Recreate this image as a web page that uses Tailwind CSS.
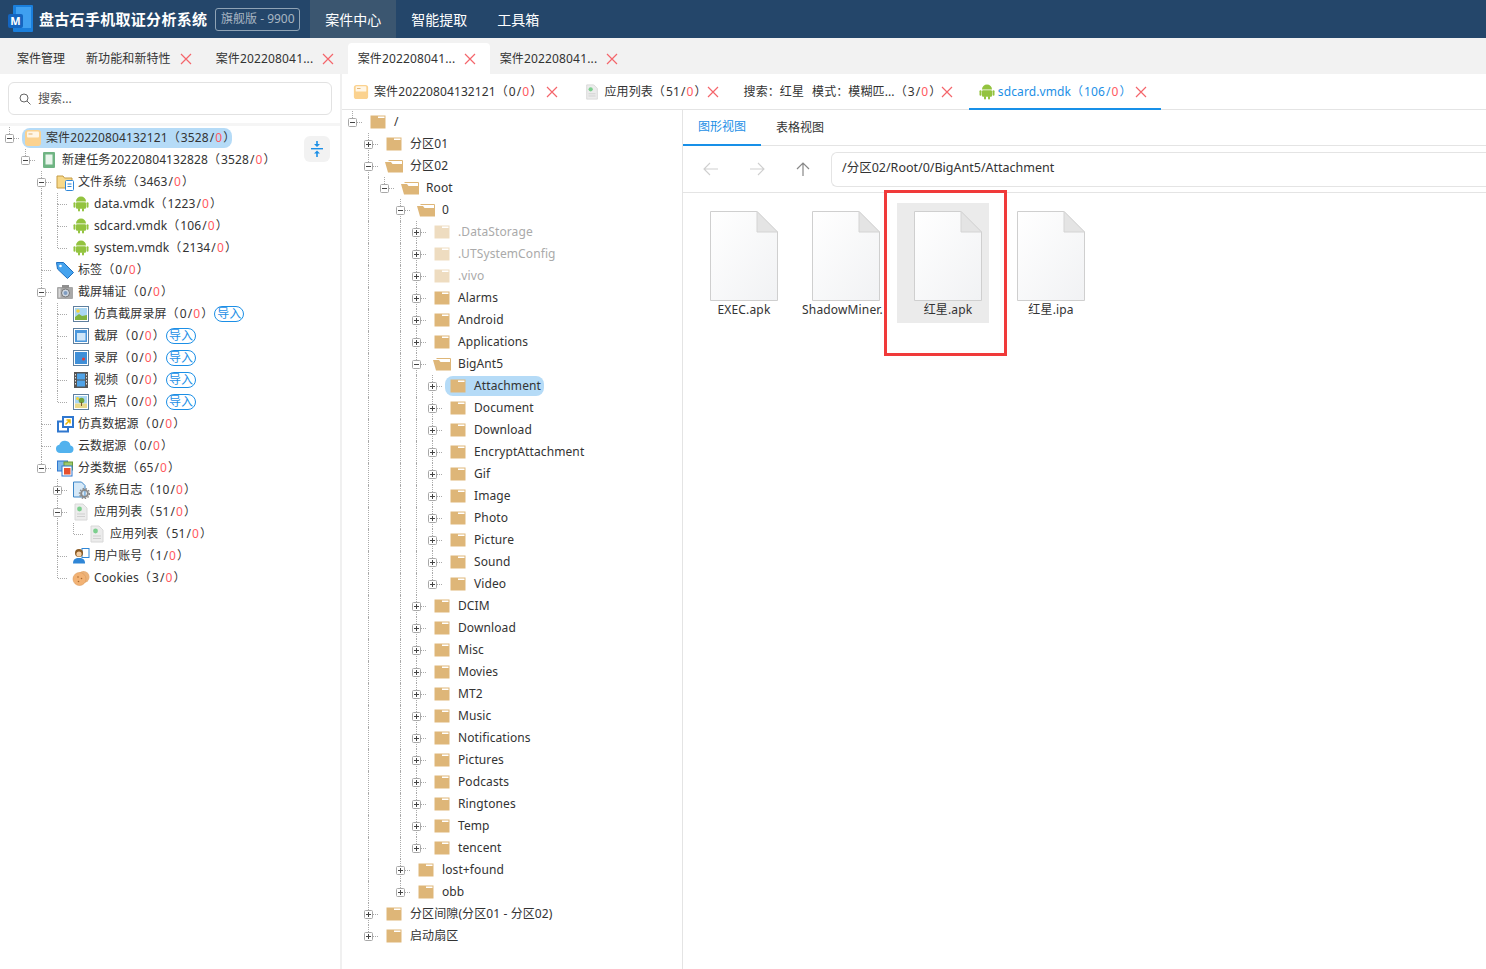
<!DOCTYPE html>
<html lang="en">
<head>
    <meta charset="UTF-8">
    <title>盘古石手机取证分析系统</title>
    <script src="https://cdn.jsdelivr.net/npm/@tailwindcss/browser@4"></script>
</head>
<body class="h-[969px] w-[1486px] overflow-hidden bg-white font-['Noto_Sans','Noto_Sans_CJK_SC',sans-serif] text-[12px] text-[#333]">

    <!-- Top bar -->
    <header class="flex h-[38px] items-center bg-[#24466a] text-white">
        <svg class="ml-[8px] h-[28px] w-[25px] shrink-0" viewBox="0 0 25 28">
            <path d="M5 1a1 1 0 0 1 1-1h18a1 1 0 0 1 1 1v25a1 1 0 0 1-1 1H6a1 1 0 0 1-1-1z" fill="#1a7fdc"/>
            <path d="M8 2h15v21H8z" fill="#3fa0f0"/>
            <rect x="0" y="9" width="15" height="14" rx="2" fill="#1465c0"/>
            <text x="7.500" y="20" text-anchor="middle" font-size="11" font-weight="700" fill="#fff" font-family="Noto Sans">M</text>
        </svg>
        <div class="ml-[6px] text-[15px] font-bold tracking-[0.3px]">盘古石手机取证分析系统</div>
        <div class="ml-[8px] flex h-[23px] w-[85px] items-center justify-center rounded-[3px] border border-[#8fa3b5] text-[12px] text-[#a9b6c3]">旗舰版 - 9900</div>
        <nav class="ml-[10px] flex h-full text-[14px]">
            <div class="flex items-center bg-[#3b5670] px-[15px]">案件中心</div>
            <div class="flex items-center px-[15px]">智能提取</div>
            <div class="flex items-center px-[15px]">工具箱</div>
        </nav>
    </header>

    <!-- Case tabs -->
    <div class="flex h-[36px] items-end whitespace-nowrap bg-[#f2f2f2] pl-[7px]">
        <div class="flex h-[31px] items-center pl-[10px] pr-[11px]">案件管理</div>
        <div class="flex h-[31px] items-center pl-[10px] pr-[14px] tracking-[0.1px]">新功能和新特性<svg class="ml-[9px] h-[12px] w-[12px]" viewBox="0 0 12 12"><path d="M1 1l10 10M11 1L1 11" stroke="#f4656b" stroke-width="1.2"/></svg></div>
        <div class="flex h-[31px] items-center pl-[10px] pr-[14px]"><span class="w-[97px] tracking-[0.15px]">案件202208041...</span><svg class="ml-[9px] h-[12px] w-[12px]" viewBox="0 0 12 12"><path d="M1 1l10 10M11 1L1 11" stroke="#f4656b" stroke-width="1.2"/></svg></div>
        <div class="flex h-[31px] items-center rounded-t-[4px] bg-white pl-[10px] pr-[14px]"><span class="w-[97px] tracking-[0.15px]">案件202208041...</span><svg class="ml-[9px] h-[12px] w-[12px]" viewBox="0 0 12 12"><path d="M1 1l10 10M11 1L1 11" stroke="#f4656b" stroke-width="1.2"/></svg></div>
        <div class="flex h-[31px] items-center pl-[10px] pr-[14px]"><span class="w-[97px] tracking-[0.15px]">案件202208041...</span><svg class="ml-[9px] h-[12px] w-[12px]" viewBox="0 0 12 12"><path d="M1 1l10 10M11 1L1 11" stroke="#f4656b" stroke-width="1.2"/></svg></div>
    </div>

    <div class="flex h-[895px]">
        <!-- Left: case tree -->
        <aside class="relative w-[340px] shrink-0">
            <div class="px-[8px] pt-[8px]">
                <div class="flex h-[33px] items-center rounded-[6px] border border-[#e2e2e2] pl-[10px] text-[#555]">
                    <svg class="h-[12px] w-[12px]" viewBox="0 0 12 12" fill="none" stroke="#666" stroke-width="1"><circle cx="5" cy="5" r="4"/><path d="M8 8l3.500 3.500"/></svg>
                    <span class="ml-[7px]">搜索...</span>
                </div>
            </div>
            <div class="mt-[8px] h-[3px] bg-[#f5f5f5]"></div>
            <div id="case-tree" class="pt-[1px]"></div>
            <button class="absolute left-[304px] top-[62px] flex h-[26px] w-[26px] items-center justify-center rounded-[6px] bg-[#f2f2f2]">
                <svg class="h-[18px] w-[14px]" viewBox="0 0 14 18" fill="#1c8fe6"><rect x="1" y="8" width="12" height="1.400"/><path d="M6.200 1h1.600v3H10L7 7 4 4h2.200zM7 10.500l3 3H7.800V17H6.200v-3.500H4z"/></svg>
            </button>
        </aside>

        <div class="w-[2px] shrink-0 bg-[#f0f0f0]"></div>

        <main class="min-w-0 flex-1">
            <!-- Opened data tabs -->
            <div class="flex h-[36px] items-stretch whitespace-nowrap border-b border-[#e4e4e4] pl-[1px] tracking-[0.1px]">
                <div class="flex items-center pl-[10px] pr-[16px] pt-[1px]">
                    <svg class="h-[16px] w-[16px]" viewBox="0 0 18 18"><rect x="1" y="1" width="16" height="16" rx="3" fill="#fbd28f"/><rect x="3" y="2.500" width="12" height="6" rx="1" fill="#fff6e6"/><rect x="4.500" y="4.500" width="4" height="1" fill="#e0b070"/></svg>
                    <span class="ml-[5px]">案件20220804132121<span class="mr-[1px]">（</span>0<span class="mx-[1px]">/</span><span class="text-[#ff5a5f]">0</span><span class="ml-[1px]">）</span></span>
                    <svg class="ml-[4px] h-[12px] w-[12px]" viewBox="0 0 12 12"><path d="M1 1l10 10M11 1L1 11" stroke="#f4656b" stroke-width="1.2"/></svg>
                </div>
                <div class="flex items-center pl-[10px] pr-[15px] pt-[1px]">
                    <svg class="h-[16px] w-[16px]" viewBox="0 0 18 18"><path d="M3 1h8l4 4v12H3z" fill="#ececec" stroke="#d8d8d8"/><circle cx="7.500" cy="6" r="2.400" fill="#7ccf8e"/><path d="M5 11h8M5 13.500h8" stroke="#cfcfcf"/></svg>
                    <span class="ml-[4px]">应用列表<span class="mr-[1px]">（</span>51<span class="mx-[1px]">/</span><span class="text-[#ff5a5f]">0</span><span class="ml-[1px]">）</span></span>
                    <svg class="h-[12px] w-[12px]" viewBox="0 0 12 12"><path d="M1 1l10 10M11 1L1 11" stroke="#f4656b" stroke-width="1.2"/></svg>
                </div>
                <div class="flex items-center pl-[10px] pr-[16px] pt-[1px]">
                    <span>搜索：红星<span class="ml-[8px]">模式：模糊匹...<span class="mr-[1px]">（</span>3<span class="mx-[1px]">/</span><span class="text-[#ff5a5f]">0</span><span class="ml-[1px]">）</span></span></span>
                    <svg class="-ml-[0.5px] h-[12px] w-[12px]" viewBox="0 0 12 12"><path d="M1 1l10 10M11 1L1 11" stroke="#f4656b" stroke-width="1.2"/></svg>
                </div>
                <div class="-mb-[1px] flex items-center border-b-2 border-[#1890e8] pl-[10px] pr-[14px] pt-[1px] text-[#1c8fe6]">
                    <svg class="h-[16px] w-[16px]" viewBox="0 0 16 16" fill="#93c33f"><path d="M3 5.600a5 5 0 0 1 10 0z"/><rect x="3" y="6.200" width="10" height="6.600" rx="1"/><rect x=".5" y="6.200" width="2" height="5.600" rx="1"/><rect x="13.500" y="6.200" width="2" height="5.600" rx="1"/><rect x="5" y="12" width="2" height="3.600" rx="1"/><rect x="9" y="12" width="2" height="3.600" rx="1"/></svg>
                    <span class="ml-[3px]">sdcard.vmdk<span class="mr-[1px]">（</span>106<span class="mx-[1px]">/</span><span class="text-[#ff5a5f]">0</span><span class="ml-[1px]">）</span></span>
                    <svg class="ml-[3px] h-[12px] w-[12px]" viewBox="0 0 12 12"><path d="M1 1l10 10M11 1L1 11" stroke="#f4656b" stroke-width="1.2"/></svg>
                </div>
            </div>

            <div class="flex h-[859px]">
                <!-- Middle: folder tree -->
                <section id="folder-tree" class="w-[341px] shrink-0 border-r border-[#e4e4e4] pl-[1px] pt-[1px]"></section>

                <!-- Right: file view -->
                <section class="relative min-w-0 flex-1">
                    <div class="flex h-[36px] border-b border-[#e4e4e4]">
                        <div class="-mb-[1px] flex w-[78px] items-center justify-center border-b-2 border-[#1890e8] text-[#1c8fe6]">图形视图</div>
                        <div class="flex w-[78px] items-center justify-center">表格视图</div>
                    </div>
                    <div class="flex h-[47px] items-center border-b border-[#e4e4e4] pl-[20px]">
                        <svg class="h-[14px] w-[16px]" viewBox="0 0 16 14" fill="none" stroke="#cfcfcf" stroke-width="1.1"><path d="M15 7H1M7 1L1 7l6 6"/></svg>
                        <svg class="ml-[30px] h-[14px] w-[16px]" viewBox="0 0 16 14" fill="none" stroke="#cfcfcf" stroke-width="1.1"><path d="M1 7h14M9 1l6 6-6 6"/></svg>
                        <svg class="ml-[31px] h-[14px] w-[14px]" viewBox="0 0 14 14" fill="none" stroke="#888" stroke-width="1.2"><path d="M7 14V1M1 7l6-6 6 6"/></svg>
                        <div class="ml-[21px] flex h-[35px] flex-1 items-center rounded-l-[6px] border border-r-0 border-[#e4e4e4] pb-[2px] pl-[10px] text-[12.5px]">/分区02/Root/0/BigAnt5/Attachment</div>
                    </div>
                    <div id="file-grid" class="flex gap-[10px] pl-[10px] pt-[10px]"></div>
                    <!-- red marker drawn over the shot -->
                    <div class="pointer-events-none absolute left-[201px] top-[80px] h-[166px] w-[123px] border-[3px] border-[#f03a3a]"></div>
                </section>
            </div>
        </main>
    </div>

    <script>
        const imgFrame = '<rect x="1.500" y="1.500" width="15" height="15" fill="#fff" stroke="#5e7f9e"/>';
        const ICONS = {
            case: '<rect x="1" y="1" width="16" height="16" rx="3" fill="#fbd28f"/><rect x="3" y="2.500" width="12" height="6" rx="1" fill="#fff6e6"/><rect x="4.500" y="4.500" width="4" height="1" fill="#e0b070"/>',
            device: '<rect x="3" y="1" width="12" height="16" rx="1" fill="#6fb483"/><rect x="5.500" y="3.500" width="7" height="10" fill="#e9f5ec"/>',
            fs: '<path d="M1 3h6l1.500 2H16v10H1z" fill="#f7d98a" stroke="#c59b45"/><rect x="9.500" y="7.500" width="8" height="10" rx="1" fill="#fff" stroke="#2f86d6"/><path d="M11.500 11h4M11.500 13.500h4" stroke="#2f86d6"/>',
            android: '<g fill="#93c33f"><path d="M4 6.600a5 5 0 0 1 10 0z"/><rect x="4" y="7.200" width="10" height="6.600" rx="1"/><rect x="1.500" y="7.200" width="2" height="5.600" rx="1"/><rect x="14.500" y="7.200" width="2" height="5.600" rx="1"/><rect x="6" y="13" width="2" height="3.600" rx="1"/><rect x="10" y="13" width="2" height="3.600" rx="1"/></g>',
            tag: '<path d="M.5 1.500h7L17.500 11.500 11.500 17.500 1.500 8z" fill="#45a3ee" stroke="#1e6fc0"/><circle cx="4.500" cy="5" r="1.300" fill="#fff"/>',
            camera: '<rect x="1" y="4" width="16" height="12" rx="1" fill="#a8a8a8"/><rect x="2.500" y="5.500" width="2" height="9" fill="#d8d8d8"/><rect x="6" y="2" width="7" height="3" fill="#8f8f8f"/><circle cx="9.500" cy="10" r="4" fill="#cfd8e2" stroke="#777"/><circle cx="9.500" cy="10" r="2" fill="#7f9cc0"/>',
            pic: imgFrame + '<rect x="3" y="3" width="12" height="12" fill="#a9d6f2"/><circle cx="6" cy="6" r="1.800" fill="#f6d23a"/><path d="M3 15v-3l4-3 3 2 5-1v5z" fill="#7fb23f"/>',
            shot: imgFrame + '<rect x="3" y="3" width="12" height="12" fill="#4a97dc"/><rect x="5" y="6" width="8.500" height="7.500" fill="#cfe6f8"/>',
            rec: imgFrame + '<rect x="3" y="3" width="12" height="12" fill="#3f8fd8"/><circle cx="11.500" cy="10" r="1.500" fill="#e23a3a"/>',
            film: '<rect x="2" y="1" width="14" height="16" fill="#555"/><rect x="5" y="2.500" width="8" height="6" fill="#4fa3e8"/><rect x="5" y="9.500" width="8" height="6" fill="#4fa3e8"/><path d="M3.500 3v12M14.500 3v12" stroke="#ddd" stroke-dasharray="1.500 1.500"/>',
            photo: imgFrame + '<rect x="3" y="3" width="12" height="7.500" fill="#a9d6f2"/><rect x="3" y="10.500" width="12" height="4.500" fill="#e9d98a"/><circle cx="5.500" cy="5.500" r="1.500" fill="#f6d23a"/><circle cx="9.500" cy="7.500" r="2.800" fill="#6fa33c"/><rect x="9" y="9" width="1" height="4" fill="#7c5a2e"/>',
            sim: '<rect x="2" y="6.500" width="10" height="10" fill="#fff" stroke="#2f77cf" stroke-width="2"/><rect x="7" y="2" width="10" height="10" fill="#fff" stroke="#2f77cf" stroke-width="2"/><path d="M9.500 9.500l4-4M10.500 5h3.500v3.500" stroke="#e9b400" stroke-width="1.500" fill="none"/>',
            cloud: '<path d="M4.200 16a4.200 4.200 0 0 1-.9-8.300 5.800 5.800 0 0 1 11.200.8A3.800 3.800 0 0 1 14 16z" fill="#52b2ee"/>',
            cat: '<rect x="1.500" y="2" width="10" height="10" fill="#7fb9ea" stroke="#2f77cf"/><rect x="8" y="3" width="8.500" height="8" fill="#9fc96a" stroke="#6d9a3a"/><rect x="6" y="7" width="10" height="10" fill="#fff" stroke="#2f77cf"/><rect x="8" y="9" width="6.500" height="6.500" fill="#e6502e"/>',
            log: '<path d="M1.500 1h8l3.500 3.500V16h-11.500z" fill="#d6e9f8" stroke="#3c86c8"/><circle cx="12.500" cy="12.500" r="3.400" fill="none" stroke="#8a8a8a" stroke-width="2"/><circle cx="12.500" cy="12.500" r="5" fill="none" stroke="#8a8a8a" stroke-width="1.400" stroke-dasharray="1.500 1.500"/>',
            app: '<path d="M3 1h8l4 4v12H3z" fill="#ececec" stroke="#d8d8d8"/><circle cx="7.500" cy="6" r="2.400" fill="#7ccf8e"/><path d="M5 11h8M5 13.500h8" stroke="#cfcfcf"/>',
            user: '<rect x="10" y="1.500" width="7" height="9" fill="#fff" stroke="#2f86d6"/><path d="M1 16.500c0-4 2-5.500 6-5.500s6 1.500 6 5.500z" fill="#2f86d6"/><circle cx="7" cy="6" r="4" fill="#8a5a24"/><circle cx="7" cy="7" r="2.600" fill="#f5cfa4"/>',
            cookie: '<circle cx="11.500" cy="8" r="6" fill="#eab27a"/><circle cx="7.500" cy="10" r="6.500" fill="#f2b274" stroke="#dc9a5a" stroke-width=".6"/><circle cx="6" cy="8" r=".8" fill="#a86a30"/><circle cx="9.500" cy="9.500" r=".8" fill="#a86a30"/><circle cx="6.500" cy="12.500" r=".8" fill="#a86a30"/>',
            folder: '<path d="M1.500 2.500h15v13h-15z" fill="#deb678"/><rect x="9" y="3.500" width="6.500" height="1.500" fill="#fff"/>',
            folderFaded: '<path d="M1.500 2.500h15v13h-15z" fill="#eedcc0"/><rect x="9" y="3.500" width="6.500" height="1.500" fill="#fff"/>',
            folderOpen: '<path d="M3.500 3.500h14v11" fill="none" stroke="#deb678"/><path d="M0 5h6l1.500 2H18v8.500H3z" fill="#deb678"/>'
        };

        // depth, label, icon, expander ('-', '+', ''), counts, import badge, selected
        const CASE_ROWS = [
            [0, '案件20220804132121', 'case', '-', '3528', false, true],
            [1, '新建任务20220804132828', 'device', '-', '3528'],
            [2, '文件系统', 'fs', '-', '3463'],
            [3, 'data.vmdk', 'android', '', '1223'],
            [3, 'sdcard.vmdk', 'android', '', '106'],
            [3, 'system.vmdk', 'android', '', '2134'],
            [2, '标签', 'tag', '', '0'],
            [2, '截屏辅证', 'camera', '-', '0'],
            [3, '仿真截屏录屏', 'pic', '', '0', true],
            [3, '截屏', 'shot', '', '0', true],
            [3, '录屏', 'rec', '', '0', true],
            [3, '视频', 'film', '', '0', true],
            [3, '照片', 'photo', '', '0', true],
            [2, '仿真数据源', 'sim', '', '0'],
            [2, '云数据源', 'cloud', '', '0'],
            [2, '分类数据', 'cat', '-', '65'],
            [3, '系统日志', 'log', '+', '10'],
            [3, '应用列表', 'app', '-', '51'],
            [4, '应用列表', 'app', '', '51'],
            [3, '用户账号', 'user', '', '1'],
            [3, 'Cookies', 'cookie', '', '3']
        ];

        const FOLDER_ROWS = [
            [0, '/', 'folder', '-'],
            [1, '分区01', 'folder', '+'],
            [1, '分区02', 'folderOpen', '-'],
            [2, 'Root', 'folderOpen', '-'],
            [3, '0', 'folderOpen', '-'],
            [4, '.DataStorage', 'folderFaded', '+'],
            [4, '.UTSystemConfig', 'folderFaded', '+'],
            [4, '.vivo', 'folderFaded', '+'],
            [4, 'Alarms', 'folder', '+'],
            [4, 'Android', 'folder', '+'],
            [4, 'Applications', 'folder', '+'],
            [4, 'BigAnt5', 'folderOpen', '-'],
            [5, 'Attachment', 'folder', '+', null, false, true],
            [5, 'Document', 'folder', '+'],
            [5, 'Download', 'folder', '+'],
            [5, 'EncryptAttachment', 'folder', '+'],
            [5, 'Gif', 'folder', '+'],
            [5, 'Image', 'folder', '+'],
            [5, 'Photo', 'folder', '+'],
            [5, 'Picture', 'folder', '+'],
            [5, 'Sound', 'folder', '+'],
            [5, 'Video', 'folder', '+'],
            [4, 'DCIM', 'folder', '+'],
            [4, 'Download', 'folder', '+'],
            [4, 'Misc', 'folder', '+'],
            [4, 'Movies', 'folder', '+'],
            [4, 'MT2', 'folder', '+'],
            [4, 'Music', 'folder', '+'],
            [4, 'Notifications', 'folder', '+'],
            [4, 'Pictures', 'folder', '+'],
            [4, 'Podcasts', 'folder', '+'],
            [4, 'Ringtones', 'folder', '+'],
            [4, 'Temp', 'folder', '+'],
            [4, 'tencent', 'folder', '+'],
            [3, 'lost+found', 'folder', '+'],
            [3, 'obb', 'folder', '+'],
            [1, '分区间隙(分区01 - 分区02)', 'folder', '+'],
            [1, '启动扇区', 'folder', '+']
        ];

        const MINUS = '<svg class="absolute left-[5px] top-[7px] h-[9px] w-[9px]" viewBox="0 0 9 9"><rect x=".5" y=".5" width="8" height="8" rx="1" fill="#fff" stroke="#a8a8a8"/><rect x="2" y="4" width="5" height="1" fill="#444"/></svg>';
        const PLUS = '<svg class="absolute left-[5px] top-[7px] h-[9px] w-[9px]" viewBox="0 0 9 9"><rect x=".5" y=".5" width="8" height="8" rx="1" fill="#fff" stroke="#a8a8a8"/><rect x="2" y="4" width="5" height="1" fill="#444"/><rect x="4" y="2" width="1" height="5" fill="#444"/></svg>';

        // true when another row of the same depth follows before the parent closes
        function hasNext(rows, index, depth) {
            for (let i = index + 1; i < rows.length; i++) {
                if (rows[i][0] < depth) return false;
                if (rows[i][0] === depth) return true;
            }
            return false;
        }

        function renderTree(target, rows, isFolderTree) {
            target.innerHTML = rows.map((row, index) => {
                const [depth, label, icon, expander, count, badge, selected] = row;
                let guides = '';
                for (let d = 0; d < depth; d++) {
                    const line = hasNext(rows, index, d) ? '<div class="absolute bottom-0 left-[9px] top-0 border-l border-dotted border-[#aaa]"></div>' : '';
                    guides += '<div class="relative h-[22px] w-[16px] shrink-0">' + line + '</div>';
                }
                const down = hasNext(rows, index, depth) ? '<div class="absolute bottom-0 left-[9px] top-[11px] border-l border-dotted border-[#aaa]"></div>' : '';
                const joint = '<div class="relative h-[22px] w-[22px] shrink-0">'
                    + '<div class="absolute left-[9px] top-0 h-[11px] border-l border-dotted border-[#aaa]"></div>' + down
                    + '<div class="absolute left-[10px] top-[11px] w-[9px] border-t border-dotted border-[#aaa]"></div>'
                    + (expander === '-' ? MINUS : expander === '+' ? PLUS : '') + '</div>';
                const counts = count === undefined || count === null ? ''
                    : '<span class="mr-[1px]">（</span>' + count + '<span class="mx-[1px]">/</span><span class="text-[#ff5a5f]">0</span><span class="ml-[1px]">）</span>';
                const tone = icon === 'folderFaded' ? 'text-[#aaa]' : 'text-[#333]';
                const pad = isFolderTree ? 'pl-[4px] pr-[3px]' : 'pl-[2px] pr-[3px]';
                const gap = isFolderTree ? 'ml-[7px]' : 'ml-[4px]';
                const pick = selected ? 'rounded-[8px] bg-[#b5dbf7]' : '';
                const trim = selected && !isFolderTree ? '-mr-[6px]' : '';
                const tag = badge ? '<span class="-ml-[2px] flex h-[16px] w-[30px] items-center justify-center rounded-full border border-[#1c8fe6] text-[#1c8fe6]">导入</span>' : '';
                return '<div class="flex h-[22px] items-center">' + guides + joint
                    + '<div class="flex h-[20px] items-center ' + pad + ' ' + pick + '">'
                    + '<svg class="h-[18px] w-[18px] shrink-0" viewBox="0 0 18 18">' + ICONS[icon] + '</svg>'
                    + '<span class="' + gap + ' ' + trim + ' whitespace-nowrap tracking-[0.1px] ' + tone + '">' + label + counts + '</span></div>' + tag + '</div>';
            }).join('');
        }

        renderTree(document.getElementById('case-tree'), CASE_ROWS, false);
        renderTree(document.getElementById('folder-tree'), FOLDER_ROWS, true);

        // File tiles: the grey selection box is narrower than the tile's content
        const FILES = [
            ['EXEC.apk', false, '', ''],
            ['ShadowMiner.', false, 'mr-[7px]', ''],
            ['红星.apk', true, '', ''],
            ['红星.ipa', false, '', 'ml-[1px]']
        ];
        document.getElementById('file-grid').innerHTML = FILES.map(([name, selected, nudge, shift]) =>
            '<div class="h-[120px] w-[92px] pt-[8px] ' + shift + ' ' + (selected ? 'bg-[#ebebeb]' : '') + '"><div class="flex w-[102px] flex-col items-center">'
            + '<svg class="h-[90px] w-[68px] shrink-0" viewBox="0 0 68 90"><defs><linearGradient id="sheet" x1="0" y1="0" x2="1" y2="1"><stop offset="0" stop-color="#ffffff"/><stop offset="1" stop-color="#f1f2f4"/></linearGradient></defs>'
            + '<path d="M.5.5H47L67.500 21v68.500H.5z" fill="url(#sheet)" stroke="#cfcfcf"/><path d="M47 .5V21h20.500z" fill="#e4e4e4" stroke="#d4d4d4"/></svg>'
            + '<div class="' + nudge + ' w-[84px] overflow-hidden whitespace-nowrap text-center leading-[18px] tracking-[0.15px]">' + name + '</div></div></div>'
        ).join('');
    </script>
</body>
</html>
